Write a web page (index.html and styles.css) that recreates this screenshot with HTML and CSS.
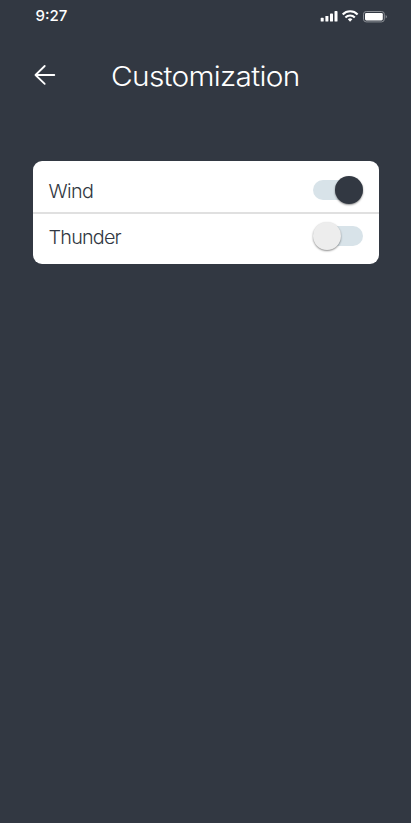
FILE: index.html
```html
<!DOCTYPE html>
<html lang="en">
<head>
<meta charset="utf-8">
<title>Customization</title>
<link rel="stylesheet" href="styles.css">
</head>
<body>
<div class="status">
  <span class="time">9:27</span>
  <svg class="status-icons" width="68" height="14" viewBox="0 0 68 14" fill="#fff">
    <rect x="0.7" y="8.8" width="3" height="3.8" rx=".7"/>
    <rect x="5.4" y="6.9" width="3" height="5.7" rx=".7"/>
    <rect x="10" y="4.6" width="3" height="8" rx=".7"/>
    <rect x="14.5" y="2" width="3" height="10.6" rx=".7"/>
    <g fill="none" stroke="#fff" stroke-width="2.1">
      <path d="M22.7 5.4a10.4 10.4 0 0 1 14.9 0"/>
      <path d="M25.4 8.4a6.7 6.7 0 0 1 9.4 0"/>
    </g>
    <path d="M27.8 10.2a3.5 3.5 0 0 1 4.6 0L30.1 12.7z"/>
    <rect x="43.5" y="2.5" width="20.8" height="10.4" rx="2.7" fill="none" stroke="#8a8e94"/>
    <rect x="45" y="4" width="17.8" height="7.4" rx="1.3"/>
    <path d="M65.7 6v3.5q1.2-.5 1.2-1.75T65.7 6z" fill="#8a8e94"/>
  </svg>
</div>
<header class="header">
  <svg class="back" width="22" height="22" viewBox="0 0 22 22" fill="none" stroke="#fff" stroke-width="1.8" stroke-linecap="round" stroke-linejoin="round">
    <path d="M20.3 11H1.5M10.7 2L1.5 11l9.2 8.8"/>
  </svg>
  <h1 class="title">Customization</h1>
</header>
<main class="card">
  <div class="row wind">
    <span class="label">Wind</span>
    <span class="switch on"><span class="knob"></span></span>
  </div>
  <div class="row thunder">
    <span class="label tight">Thunder</span>
    <span class="switch"><span class="knob"></span></span>
  </div>
</main>
</body>
</html>
```
FILE: styles.css
```css
* { box-sizing: border-box; }
body {
  margin: 0;
  min-height: 823px;
  background: #323842;
  color: #fff;
  font-family: Inter, "Liberation Sans", sans-serif;
}
.status {
  display: flex;
  justify-content: space-between;
  align-items: center;
  height: 32px;
  padding: 0 23px 0 35.5px;
}
.time { font-size: 15px; font-weight: 550; line-height: 32px; }
.status-icons { display: block; }
.header {
  display: flex;
  align-items: center;
  height: 50px;
  margin-top: 18px;
  padding-left: 34px;
}
.back { display: block; flex: none; }
.title {
  margin: 0 0 0 54.5px;
  font-size: 27.5px;
  font-weight: 330;
  line-height: 50px;
  letter-spacing: -0.65px;
  transform: translateY(0.5px) scaleX(1.085);
  transform-origin: left center;
}
.card {
  margin: 61px 32px 0 33px;
  height: 103px;
  border-radius: 9px;
  background: #fff;
  color: #323842;
}
.row {
  display: flex;
  justify-content: space-between;
  align-items: center;
  padding: 0 16px;
}
.wind { height: 53px; padding-top: 6px; border-bottom: 2px solid #e0e0e0; }
.thunder { height: 50px; padding-bottom: 6px; }
.label {
  font-size: 18.5px;
  font-weight: 320;
  line-height: 24px;
  letter-spacing: -0.6px;
  transform: translate(-0.5px, 0.6px) scaleX(1.07);
  transform-origin: left center;
}
.tight { letter-spacing: -0.75px; }
.switch {
  display: flex;
  align-items: center;
  width: 50px;
  height: 20px;
  border-radius: 10px;
  background: #d8e3e9;
}
.knob {
  flex: none;
  width: 28px;
  height: 28px;
  border-radius: 50%;
  background: #ededed;
  box-shadow: 0 1px 2px rgba(0, 0, 0, .45);
}
.on { justify-content: flex-end; }
.on .knob { background: #323842; }
```
